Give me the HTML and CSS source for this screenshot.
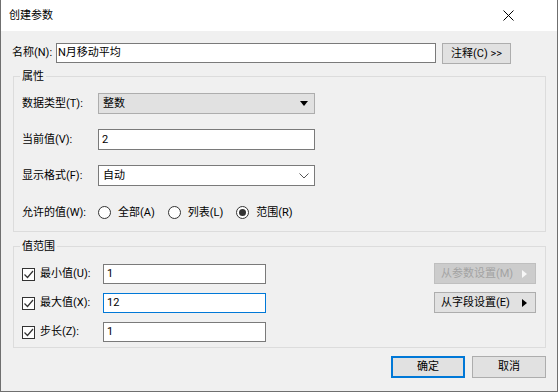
FILE: index.html
```html
<!DOCTYPE html>
<html lang="zh-CN">
<head>
  <meta charset="UTF-8" />
  <title>创建参数</title>
  <link rel="stylesheet" href="styles.css">
</head>
<body>
  <div class="dialog">
    <!-- Title bar -->
    <div class="titlebar">
      <span class="title">创建参数</span>
      <svg class="close" width="11" height="11" viewBox="0 0 11 11">
        <path d="M0.5 0.5 L10.5 10.5 M10.5 0.5 L0.5 10.5" stroke="#000" stroke-width="1" fill="none" />
      </svg>
    </div>

    <div class="content">
      <!-- Name -->
      <div class="name-row">
        <span class="name-label">名称(N):</span>
        <div class="textbox name-input">N月移动平均</div>
        <div class="btn comment-btn">注释(C) &gt;&gt;</div>
      </div>

      <!-- Properties group -->
      <fieldset class="group props">
        <legend>属性</legend>
        <div class="row first">
          <span class="label">数据类型(T):</span>
          <div class="combo gray">
            <span>整数</span>
            <svg width="8" height="5" viewBox="0 0 8 5"><path d="M0 0 H8 L4 5 Z" fill="#000" /></svg>
          </div>
        </div>
        <div class="row">
          <span class="label">当前值(V):</span>
          <div class="textbox field">2</div>
        </div>
        <div class="row">
          <span class="label">显示格式(F):</span>
          <div class="combo">
            <span>自动</span>
            <svg class="chevron" width="10" height="6" viewBox="0 0 10 6"><path d="M0.5 0.5 L5 5 L9.5 0.5" stroke="#555" stroke-width="1" fill="none" /></svg>
          </div>
        </div>
        <div class="row radios">
          <span class="label">允许的值(W):</span>
          <span class="radio-item"><span class="radio"></span>全部(A)</span>
          <span class="radio-item"><span class="radio"></span>列表(L)</span>
          <span class="radio-item"><span class="radio checked"></span>范围(R)</span>
        </div>
      </fieldset>

      <!-- Range group -->
      <fieldset class="group range">
        <legend>值范围</legend>
        <div class="range-body">
          <div class="range-rows">
            <div class="range-row">
              <span class="checkbox"><svg width="11" height="11" viewBox="0 0 11 11"><path d="M1.5 5.5 L4.5 8.5 L10 2" stroke="#333" stroke-width="1.2" fill="none" /></svg></span>
              <span class="check-label">最小值(U):</span>
              <div class="textbox small">1</div>
            </div>
            <div class="range-row">
              <span class="checkbox"><svg width="11" height="11" viewBox="0 0 11 11"><path d="M1.5 5.5 L4.5 8.5 L10 2" stroke="#333" stroke-width="1.2" fill="none" /></svg></span>
              <span class="check-label">最大值(X):</span>
              <div class="textbox small focused">12</div>
            </div>
            <div class="range-row">
              <span class="checkbox"><svg width="11" height="11" viewBox="0 0 11 11"><path d="M1.5 5.5 L4.5 8.5 L10 2" stroke="#333" stroke-width="1.2" fill="none" /></svg></span>
              <span class="check-label">步长(Z):</span>
              <div class="textbox small">1</div>
            </div>
          </div>
          <div class="range-buttons">
            <div class="btn menu-btn disabled">
              <span>从参数设置(M)</span>
              <svg width="5" height="8" viewBox="0 0 5 8"><path d="M0 0 L5 4 L0 8 Z" fill="#f7f7f7" /></svg>
            </div>
            <div class="btn menu-btn">
              <span>从字段设置(E)</span>
              <svg width="5" height="8" viewBox="0 0 5 8"><path d="M0 0 L5 4 L0 8 Z" fill="#000" /></svg>
            </div>
          </div>
        </div>
      </fieldset>

      <!-- Footer buttons -->
      <div class="footer">
        <div class="btn action default">确定</div>
        <div class="btn action">取消</div>
      </div>
    </div>
  </div>
</body>
</html>
```

FILE: styles.css
```css
* {
  margin: 0;
  padding: 0;
  box-sizing: border-box;
}

html, body {
  width: 558px;
  height: 392px;
  overflow: hidden;
  font-family: Roboto, "Noto Sans CJK SC", sans-serif;
  font-size: 11px;
  line-height: 16px;
  color: #000;
}

.dialog {
  width: 558px;
  height: 392px;
  background: #f0f0f0;
  border: 1px solid #6f6f6f;
  border-top: none;
  display: flex;
  flex-direction: column;
}

.titlebar {
  height: 31px;
  background: #fff;
  display: flex;
  align-items: center;
  justify-content: space-between;
  padding: 0 43px 0 8px;
}

.close {
  display: block;
}

.content {
  padding: 12px 11px 0 10px;
}

/* name row */
.name-row {
  display: flex;
  align-items: flex-start;
  height: 21px;
}

.name-label {
  width: 45px;
  padding-left: 1px;
  line-height: 20px;
}

.textbox {
  background: #fff;
  border: 1px solid #7a7a7a;
  height: 20px;
  line-height: 18px;
  padding-left: 3px;
  white-space: nowrap;
}

.name-input {
  width: 380px;
  padding-left: 1px;
}

.btn {
  background: #e1e1e1;
  border: 1px solid #adadad;
  height: 21px;
  line-height: 19px;
  text-align: center;
  white-space: nowrap;
}

.comment-btn {
  width: 69px;
  margin-left: 6px;
}

/* groups */
.group {
  border: 1px solid #dcdcdc;
  margin-left: 2px;
}

.group legend {
  line-height: 15px;
  padding: 0 2px;
  margin-left: -2px;
}

.props {
  margin-top: 5px;
  padding: 9px 9px 8px 8px;
}

.row {
  display: flex;
  align-items: center;
  height: 21px;
  margin-top: 15px;
}

.row.first {
  margin-top: 0;
}

.row.radios {
  margin-top: 16px;
}

.label {
  width: 76px;
  flex-shrink: 0;
}

.combo {
  width: 217px;
  height: 21px;
  border: 1px solid #7a7a7a;
  background: #fff;
  display: flex;
  align-items: center;
  justify-content: space-between;
  padding: 0 5px 0 4px;
}

.combo.gray {
  background: #e1e1e1;
  border-color: #adadad;
  padding-right: 6px;
}

.field {
  width: 217px;
  height: 21px;
  line-height: 19px;
}

.radio-item {
  display: flex;
  align-items: center;
  margin-right: 13px;
}

.radio {
  width: 13px;
  height: 13px;
  border: 1px solid #333;
  border-radius: 50%;
  background: #fff;
  margin-right: 7px;
  display: flex;
  align-items: center;
  justify-content: center;
}

.radio.checked::after {
  content: "";
  width: 7px;
  height: 7px;
  border-radius: 50%;
  background: #333;
}

/* range group */
.range {
  margin-top: 7px;
  padding: 9px 9px 5px 8px;
}

.range-body {
  display: flex;
  justify-content: space-between;
}

.range-rows {
  padding-top: 1px;
}

.range-row {
  display: flex;
  align-items: center;
  height: 20px;
  margin-bottom: 9px;
}

.range-row:last-child {
  margin-bottom: 0;
}

.checkbox {
  width: 13px;
  height: 13px;
  border: 1px solid #333;
  background: #fff;
  margin-right: 5px;
  display: flex;
  align-items: center;
  justify-content: center;
}

.checkbox svg {
  display: block;
}

.check-label {
  width: 63px;
}

.small {
  width: 163px;
  height: 20px;
}

.focused {
  border-color: #0078d7;
}

.range-buttons {
  display: flex;
  flex-direction: column;
  gap: 8px;
}

.menu-btn {
  width: 102px;
  display: flex;
  align-items: center;
  justify-content: space-between;
  padding: 0 8px 0 6px;
}

.menu-btn.disabled {
  background: #cccccc;
  border-color: #bfbfbf;
  color: #a3a3a3;
}

/* footer */
.footer {
  display: flex;
  justify-content: flex-end;
  gap: 7px;
  margin-top: 8px;
}

.action {
  width: 74px;
  height: 22px;
  line-height: 20px;
}

.action.default {
  border: 2px solid #0078d7;
  line-height: 18px;
}
```
